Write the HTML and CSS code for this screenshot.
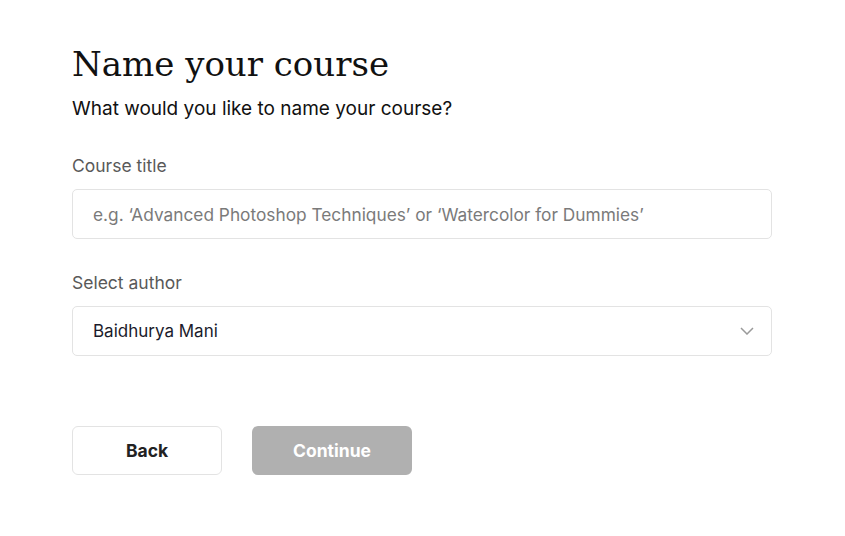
FILE: index.html
```html
<!DOCTYPE html>
<html>
<head>
<meta charset="utf-8">
<link rel="stylesheet" href="styles.css">
</head>
<body>
<main class="page">
  <h1 class="title">Name your course</h1>
  <p class="subtitle">What would you like to name your course?</p>
  <div class="field">
    <label class="label">Course title</label>
    <div class="input"><span class="placeholder">e.g. ‘Advanced Photoshop Techniques’ or ‘Watercolor for Dummies’</span></div>
  </div>
  <div class="field">
    <label class="label">Select author</label>
    <div class="input select">
      <span class="value">Baidhurya Mani</span>
      <svg class="chevron" width="14" height="8" viewBox="0 0 14 8"><path d="M1 1l6 6 6-6" fill="none" stroke="#9a9a9a" stroke-width="1.5"/></svg>
    </div>
  </div>
  <div class="actions">
    <button class="btn back">Back</button>
    <button class="btn continue">Continue</button>
  </div>
</main>
</body>
</html>
```
FILE: styles.css
```css
body {
  margin: 0;
  background: #fff;
  font-family: Inter, "Liberation Sans", sans-serif;
}
.page {
  width: 700px;
  padding: 38px 0 0 72px;
}
.title {
  margin: 0;
  font-family: "DejaVu Serif", serif;
  font-weight: 400;
  font-size: 34px;
  line-height: 52px;
  color: #111;
}
.subtitle {
  margin: 6px 0 0;
  font-size: 19px;
  line-height: 26px;
  color: #111;
}
.field {
  margin-top: 32px;
  display: flex;
  flex-direction: column;
}
.field + .field { margin-top: 32px; }
.label {
  font-size: 17.5px;
  line-height: 24px;
  color: #595959;
  margin-bottom: 11px;
}
.input {
  box-sizing: border-box;
  height: 50px;
  border: 1px solid #e3e3e3;
  border-radius: 5px;
  padding: 0 20px;
  display: flex;
  align-items: center;
  font-size: 17.3px;
}
.placeholder { color: #7a7a7a; }
.value { color: #1b1b2b; flex: 1; font-size: 17px; }
.select { padding-right: 17px; }
.actions {
  margin-top: 70px;
  display: flex;
  gap: 30px;
}
.btn {
  height: 49px;
  border-radius: 6px;
  font-family: Inter, "Liberation Sans", sans-serif;
  font-size: 17.5px;
  font-weight: 700;
}
.back {
  width: 150px;
  background: #fff;
  border: 1px solid #e3e3e3;
  color: #222;
}
.continue {
  width: 160px;
  background: #b0b0b0;
  border: none;
  color: #fff;
}
```
